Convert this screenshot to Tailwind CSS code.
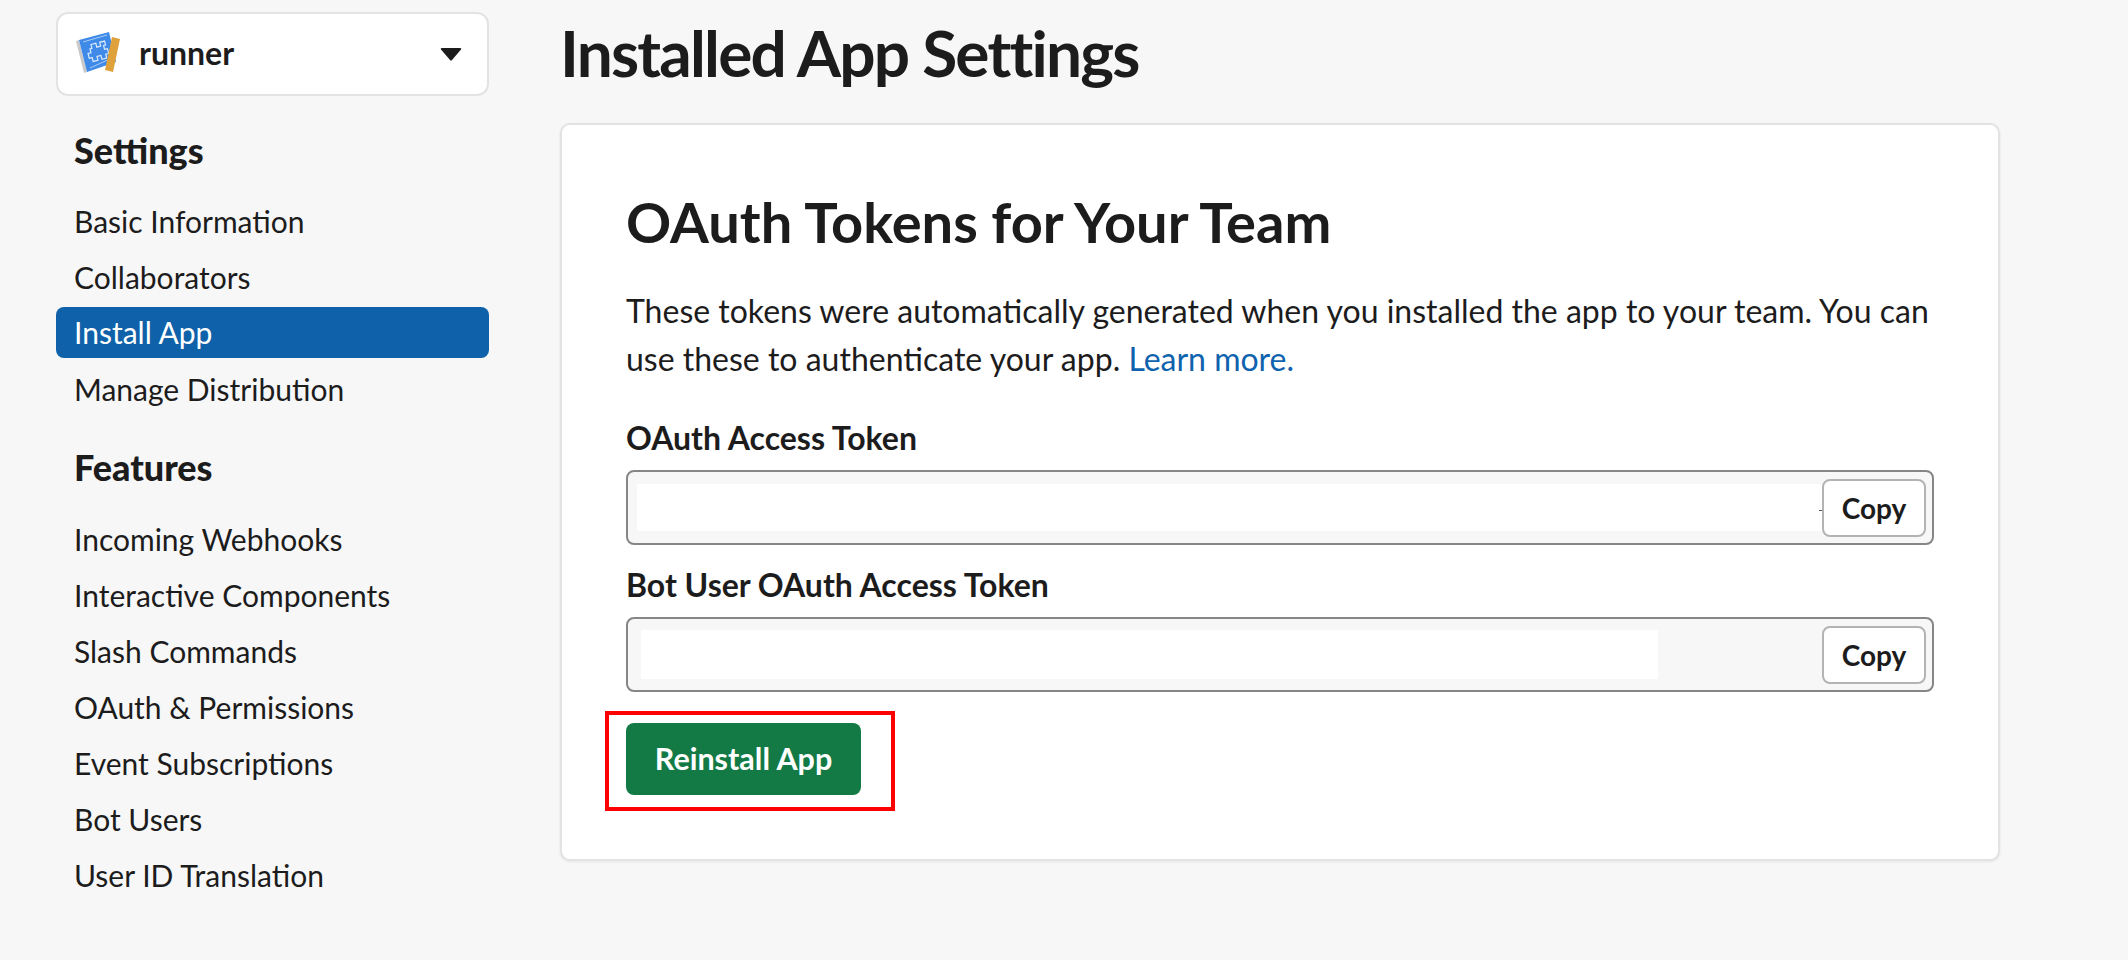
<!DOCTYPE html>
<html lang="en">
<head>
    <meta charset="UTF-8">
    <title>Installed App Settings</title>
    <script src="https://cdn.jsdelivr.net/npm/@tailwindcss/browser@4"></script>
</head>
<body class="h-[960px] overflow-hidden bg-[#f7f7f7] text-[#1d1c1d] font-['Lato','Noto_Sans',sans-serif]">
    <div class="flex">
        <!-- sidebar -->
        <aside class="w-[560px] shrink-0 pl-[56px] pt-[12px]">
            <div class="w-[433px] h-[84px] flex items-center bg-white border-2 border-[#e3e3e3] rounded-[12px] pl-[17px] pr-[25px]">
                <svg class="w-[46px] h-[46px] shrink-0" viewBox="0 0 46 46">
                    <path d="M1 10 L4 9 L12 41 L9 42 Z" fill="#c9c9c9"/>
                    <path d="M4 9 L34 1 L41 31 L12 41 Z" fill="#3f8ae8"/>
                    <path d="M8 11 L32 4 M37 27 L15 37" stroke="#a8cdf5" stroke-width="1" fill="none"/>
                    <path d="M18 12 h5 v4 h4 v-4 h5 v4 h-2 v4 h3 v5 h-3 v4 h-5 v-4 h-4 v4 h-5 v-4 h-3 v-5 h3 v-4 h2 z" fill="none" stroke="#dcebfc" stroke-width="1.2" transform="rotate(-14 23 21)"/>
                    <path d="M37 6 L45 8 L38 41 L30 39 Z" fill="#dfa13a"/>
                </svg>
                <span class="ml-[18px] text-[32px] font-bold leading-none -mt-[2px]">runner</span>
                <svg class="ml-auto w-[22px] h-[13px]" viewBox="0 0 22 13"><path d="M1 1.5 Q0 0 2 0 H20 Q22 0 21 1.5 L12 12 Q11 13 10 12 Z" fill="#1d1c1d"/></svg>
            </div>

            <h2 class="mt-[32px] pl-[18px] text-[36px] font-black leading-[44px]">Settings</h2>
            <nav class="mt-[21px] flex flex-col w-[433px] text-[30px]">
                <a class="h-[56px] flex items-center pl-[18px]">Basic Information</a>
                <a class="h-[56px] flex items-center pl-[18px]">Collaborators</a>
                <a class="h-[51px] mt-[2px] mb-[3px] flex items-center pl-[18px] rounded-[8px] bg-[#0f62a9] text-white">Install App</a>
                <a class="h-[56px] flex items-center pl-[18px]">Manage Distribution</a>
            </nav>

            <h2 class="mt-[28px] pl-[18px] text-[36px] font-black leading-[44px]">Features</h2>
            <nav class="mt-[22px] flex flex-col text-[30px]">
                <a class="h-[56px] flex items-center pl-[18px]">Incoming Webhooks</a>
                <a class="h-[56px] flex items-center pl-[18px]">Interactive Components</a>
                <a class="h-[56px] flex items-center pl-[18px]">Slash Commands</a>
                <a class="h-[56px] flex items-center pl-[18px]">OAuth &amp; Permissions</a>
                <a class="h-[56px] flex items-center pl-[18px]">Event Subscriptions</a>
                <a class="h-[56px] flex items-center pl-[18px]">Bot Users</a>
                <a class="h-[56px] flex items-center pl-[18px]">User ID Translation</a>
            </nav>
        </aside>

        <!-- main -->
        <main class="w-[1440px]">
            <h1 class="mt-[17px] text-[64px] font-bold leading-[72px] tracking-[-1.8px]">Installed App Settings</h1>
            <section class="mt-[34px] h-[738px] bg-white border-2 border-[#e3e3e3] rounded-[10px] pl-[64px] pr-[64px] pt-[61px] shadow-[0_1px_3px_rgba(0,0,0,0.08)]">
                <h2 class="text-[56px] font-bold leading-[72px]">OAuth Tokens for Your Team</h2>
                <p class="mt-[29px] text-[32px] leading-[48px]">These tokens were automatically generated when you installed the app to your team. You can use these to authenticate your app. <a class="text-[#0f62ad]">Learn more.</a></p>

                <label class="block mt-[33px] text-[32px] font-bold leading-[44px]">OAuth Access Token</label>
                <div class="mt-[10px] h-[75px] flex items-center border-2 border-[#868686] rounded-[8px] bg-[#f7f7f7] pl-[9px] pr-[6px]">
                    <div class="h-[47px] flex-1 bg-white flex items-center justify-end"><span class="w-[3px] h-[1px] mt-[6px] bg-[#555555]"></span></div>
                    <button class="w-[104px] h-[58px] bg-white border-2 border-[#b3b3b3] rounded-[8px] text-[28px] font-bold">Copy</button>
                </div>

                <label class="block mt-[18px] text-[32px] font-bold leading-[44px]">Bot User OAuth Access Token</label>
                <div class="mt-[10px] h-[75px] flex items-center border-2 border-[#868686] rounded-[8px] bg-[#f7f7f7] pl-[13px] pr-[6px]">
                    <div class="h-[49px] w-[1017px] bg-white"></div>
                    <button class="ml-auto w-[104px] h-[58px] bg-white border-2 border-[#b3b3b3] rounded-[8px] text-[28px] font-bold">Copy</button>
                </div>

                <div class="relative mt-[31px] w-fit">
                    <button class="w-[235px] h-[72px] rounded-[8px] bg-[#137a45] text-white text-[30.5px] font-bold">Reinstall App</button>
                    <div class="absolute left-[-21px] top-[-12px] w-[290px] h-[100px] border-4 border-[#fe0000]"></div>
                </div>
            </section>
        </main>
    </div>
</body>
</html>
